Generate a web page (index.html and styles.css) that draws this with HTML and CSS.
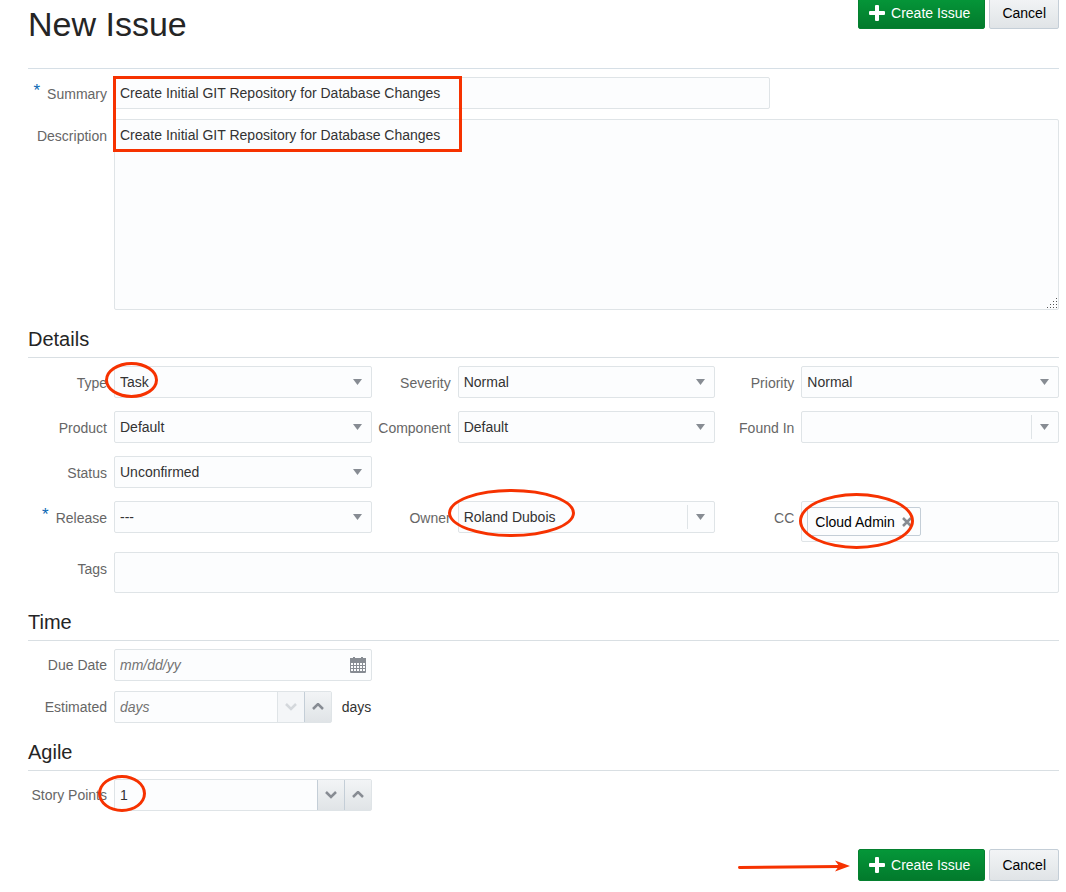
FILE: index.html
```html
<!DOCTYPE html>
<html lang="en">
<head>
<meta charset="utf-8">
<meta name="viewport" content="width=device-width, initial-scale=1">
<title>New Issue</title>
<link rel="stylesheet" href="styles.css">
</head>
<body>
<form class="page">
  <header class="page-header">
    <h1 class="page-title">New Issue</h1>
    <div class="actions">
      <button class="btn btn-primary" type="button"><svg class="plus" viewBox="0 0 16 16"><path d="M7 0h2q1 0 1 1v5h5q1 0 1 1v2q0 1-1 1h-5v5q0 1-1 1H7q-1 0-1-1v-5H1q-1 0-1-1V7q0-1 1-1h5V1q0-1 1-1z"/></svg>Create Issue</button>
      <button class="btn" type="button">Cancel</button>
    </div>
  </header>

  <div class="rows">
    <div class="field">
      <label class="label" for="summary"><span class="required">*</span>Summary</label>
      <div class="control control-summary">
        <input class="box" id="summary" type="text" value="Create Initial GIT Repository for Database Changes">
        <span class="mark mark-summary"></span>
      </div>
    </div>
    <div class="field">
      <label class="label" for="description">Description</label>
      <div class="control">
        <textarea class="box area" id="description">Create Initial GIT Repository for Database Changes</textarea>
        <svg class="grip" viewBox="0 0 11 11"><path d="M9 0h1v1h-1zM6 3h1v1h-1zM9 3h1v1h-1zM3 6h1v1h-1zM6 6h1v1h-1zM9 6h1v1h-1zM0 9h1v1h-1zM3 9h1v1h-1zM6 9h1v1h-1zM9 9h1v1h-1z"/></svg>
      </div>
    </div>
  </div>

  <h2 class="section-title">Details</h2>
  <div class="details">
    <div class="field">
      <label class="label" for="type">Type</label>
      <div class="control">
        <select class="box" id="type"><option>Task</option></select>
        <svg class="caret" viewBox="0 0 10 6"><path d="M0 0h9L4.500 6z"/></svg>
        <span class="mark oval mark-type"></span>
      </div>
    </div>
    <div class="field">
      <label class="label" for="severity">Severity</label>
      <div class="control">
        <select class="box" id="severity"><option>Normal</option></select>
        <svg class="caret" viewBox="0 0 10 6"><path d="M0 0h9L4.500 6z"/></svg>
      </div>
    </div>
    <div class="field">
      <label class="label" for="priority">Priority</label>
      <div class="control">
        <select class="box" id="priority"><option>Normal</option></select>
        <svg class="caret" viewBox="0 0 10 6"><path d="M0 0h9L4.500 6z"/></svg>
      </div>
    </div>
    <div class="field">
      <label class="label" for="product">Product</label>
      <div class="control">
        <select class="box" id="product"><option>Default</option></select>
        <svg class="caret" viewBox="0 0 10 6"><path d="M0 0h9L4.500 6z"/></svg>
      </div>
    </div>
    <div class="field">
      <label class="label" for="component">Component</label>
      <div class="control">
        <select class="box" id="component"><option>Default</option></select>
        <svg class="caret" viewBox="0 0 10 6"><path d="M0 0h9L4.500 6z"/></svg>
      </div>
    </div>
    <div class="field">
      <label class="label" for="found">Found In</label>
      <div class="control">
        <input class="box" id="found" type="text">
        <button class="combo-button" type="button" aria-label="Show versions"><svg class="caret-icon" viewBox="0 0 10 6"><path d="M0 0h9L4.500 6z"/></svg></button>
      </div>
    </div>
    <div class="field first">
      <label class="label" for="status">Status</label>
      <div class="control">
        <select class="box" id="status"><option>Unconfirmed</option></select>
        <svg class="caret" viewBox="0 0 10 6"><path d="M0 0h9L4.500 6z"/></svg>
      </div>
    </div>
    <div class="field first">
      <label class="label" for="release"><span class="required">*</span>Release</label>
      <div class="control">
        <select class="box" id="release"><option>---</option></select>
        <svg class="caret" viewBox="0 0 10 6"><path d="M0 0h9L4.500 6z"/></svg>
      </div>
    </div>
    <div class="field">
      <label class="label" for="owner">Owner</label>
      <div class="control">
        <input class="box" id="owner" type="text" value="Roland Dubois">
        <button class="combo-button" type="button" aria-label="Show owners"><svg class="caret-icon" viewBox="0 0 10 6"><path d="M0 0h9L4.500 6z"/></svg></button>
        <span class="mark oval mark-owner"></span>
      </div>
    </div>
    <div class="field">
      <label class="label" for="cc">CC</label>
      <div class="control">
        <div class="box tokens">
          <span class="token">Cloud Admin<button class="token-remove" type="button" aria-label="Remove Cloud Admin"><svg class="cross" viewBox="0 0 10 10"><path d="M1 1l8 8M9 1l-8 8"/></svg></button></span>
          <input class="token-input" id="cc" type="text">
        </div>
        <span class="mark oval mark-cc"></span>
      </div>
    </div>
    <div class="field wide">
      <label class="label" for="tags">Tags</label>
      <div class="control"><input class="box tall" id="tags" type="text"></div>
    </div>
  </div>

  <h2 class="section-title">Time</h2>
  <div class="rows narrow">
    <div class="field">
      <label class="label" for="due">Due Date</label>
      <div class="control">
        <input class="box" id="due" type="text" placeholder="mm/dd/yy">
        <button class="date-button" type="button" aria-label="Pick a date"><svg class="calendar" viewBox="0 0 16 16"><path class="calendar-body" d="M3 0h2v1h6V0h2v1h3v14q0 1-1 1H1q-1 0-1-1V1h3z"/><path class="calendar-days" d="M1 6h2v2H1zM4 6h2v2H4zM7 6h2v2H7zM10 6h2v2h-2zM13 6h2v2h-2zM1 9h2v2H1zM4 9h2v2H4zM7 9h2v2H7zM10 9h2v2h-2zM13 9h2v2h-2zM1 12h2v2H1zM4 12h2v2H4zM7 12h2v2H7zM10 12h2v2h-2zM13 12h2v2h-2z"/></svg></button>
      </div>
    </div>
    <div class="field">
      <label class="label" for="estimated">Estimated</label>
      <div class="with-unit">
        <div class="box spinner">
          <input class="spinner-input" id="estimated" type="text" placeholder="days">
          <button class="step" type="button" aria-label="Decrease estimate" disabled><svg class="chevron" viewBox="0 0 12 8"><path d="M1 1l5 5 5-5"/></svg></button>
          <button class="step" type="button" aria-label="Increase estimate"><svg class="chevron" viewBox="0 0 12 8"><path d="M1 6l5-5 5 5"/></svg></button>
        </div>
        <span class="unit">days</span>
      </div>
    </div>
  </div>

  <h2 class="section-title">Agile</h2>
  <div class="rows narrow">
    <div class="field">
      <label class="label" for="points">Story Points</label>
      <div class="control">
        <div class="box spinner">
          <input class="spinner-input" id="points" type="text" value="1">
          <button class="step" type="button" aria-label="Decrease points"><svg class="chevron" viewBox="0 0 12 8"><path d="M1 1l5 5 5-5"/></svg></button>
          <button class="step" type="button" aria-label="Increase points"><svg class="chevron" viewBox="0 0 12 8"><path d="M1 6l5-5 5 5"/></svg></button>
        </div>
        <span class="mark oval mark-points"></span>
      </div>
    </div>
  </div>

  <footer class="page-footer">
    <svg class="arrow" viewBox="0 0 112 14"><path class="arrow-line" d="M1.500 9.500L102 8.500"/><path class="arrow-head" d="M97 2.500L112 8 97 13.500l4-5.500z"/></svg>
    <div class="actions">
      <button class="btn btn-primary" type="button"><svg class="plus" viewBox="0 0 16 16"><path d="M7 0h2q1 0 1 1v5h5q1 0 1 1v2q0 1-1 1h-5v5q0 1-1 1H7q-1 0-1-1v-5H1q-1 0-1-1V7q0-1 1-1h5V1q0-1 1-1z"/></svg>Create Issue</button>
      <button class="btn" type="button">Cancel</button>
    </div>
  </footer>
</form>
</body>
</html>
```

FILE: styles.css
```css
* {
  box-sizing: border-box;
}

body {
  margin: 0;
  background: #fff;
  color: #333;
  font: 14px/18px "Liberation Sans", Arial, sans-serif;
}

input,
select,
textarea,
button {
  margin: 0;
  color: inherit;
  font: inherit;
}

.page {
  padding: 0 7px 11px 28px;
}

.page-header {
  display: flex;
  justify-content: space-between;
  align-items: flex-start;
  margin-top: -3px;
  padding-bottom: 24px;
  border-bottom: 1px solid #d6dfe6;
}

.page-title {
  margin: 7px 0 0;
  color: #252525;
  font-size: 34px;
  font-weight: 400;
  line-height: 40px;
}

.actions {
  display: flex;
  gap: 4px;
}

.btn {
  display: flex;
  align-items: center;
  gap: 6px;
  height: 32px;
  padding: 0 12px;
  border: 1px solid #c4ced7;
  border-radius: 2px;
  background: linear-gradient(#f2f4f6, #e0e4e7);
  color: #000;
}

.btn-primary {
  padding: 0 14px 0 10px;
  border-color: #04802f;
  background: linear-gradient(#059739, #027a2c);
  color: #fff;
}

.plus {
  width: 16px;
  height: 16px;
  fill: #fff;
}

.rows {
  display: grid;
  gap: 10px;
  padding-top: 8px;
}

.details {
  display: grid;
  grid-template-columns: repeat(3, minmax(0, 1fr));
  grid-auto-rows: minmax(35px, auto);
  row-gap: 10px;
  padding-top: 8px;
}

.narrow {
  grid-template-columns: minmax(0, 1fr);
  width: calc(100% / 3);
}

.field {
  display: grid;
  grid-template-columns: 79px minmax(0, 1fr);
  column-gap: 7px;
  align-items: start;
}

.first {
  grid-column: 1;
}

.wide {
  grid-column: 1 / -1;
}

.label {
  display: flex;
  justify-content: flex-end;
  padding-top: 8px;
  color: #666;
  white-space: nowrap;
}

.required {
  margin-right: 7px;
  color: #0a68b4;
  font-size: 17px;
  line-height: 12px;
}

.control {
  display: grid;
  grid-template-columns: minmax(0, 1fr);
  position: relative;
}

.control > * {
  grid-area: 1 / 1;
}

.control-summary {
  max-width: 656px;
}

.box {
  width: 100%;
  height: 32px;
  padding: 0 5px;
  border: 1px solid #dfe4e7;
  border-radius: 2px;
  background: #fcfdfe;
  appearance: none;
}

.area {
  height: 191px;
  padding: 6px 5px;
  resize: none;
}

.tall {
  height: 41px;
}

.grip {
  place-self: end;
  width: 11px;
  height: 11px;
  margin: 0 1px 1px 0;
  fill: #555;
}

.caret {
  place-self: center end;
  width: 10px;
  height: 6px;
  margin-right: 9px;
  fill: #878c93;
  pointer-events: none;
}

.combo-button {
  place-self: center end;
  display: grid;
  place-content: center;
  width: 27px;
  height: 24px;
  margin-right: 1px;
  padding: 0;
  border: 0;
  border-left: 1px solid #dfe4e7;
  background: none;
}

.caret-icon {
  width: 10px;
  height: 6px;
  fill: #878c93;
}

.tokens {
  display: flex;
  height: auto;
  padding: 5px;
}

.token {
  display: flex;
  align-items: center;
  flex: none;
  gap: 7px;
  height: 29px;
  padding: 0 8px 0 7px;
  border: 1px solid #c4ced7;
  border-radius: 2px;
  background: #fcfdfe;
  color: #000;
}

.token-remove {
  display: flex;
  padding: 0;
  border: 0;
  background: none;
}

.cross {
  width: 10px;
  height: 10px;
  fill: none;
  stroke: #878c93;
  stroke-width: 2.5;
}

.token-input {
  flex: 1;
  min-width: 0;
  padding: 0;
  border: 0;
  background: none;
}

.section-title {
  margin: 15px 0 0;
  padding-bottom: 4px;
  border-bottom: 1px solid #d9dfe3;
  color: #252525;
  font-size: 20px;
  font-weight: 400;
  line-height: 28px;
}

::placeholder {
  color: #737373;
  font-style: italic;
  opacity: 1;
}

.narrow .label {
  padding-top: 7px;
}

.date-button {
  place-self: center end;
  display: flex;
  margin-right: 6px;
  padding: 0;
  border: 0;
  background: none;
}

.calendar {
  width: 16px;
  height: 16px;
}

.calendar-body {
  fill: #878c93;
}

.calendar-days {
  fill: #fcfdfe;
}

.with-unit {
  display: flex;
  align-items: center;
  gap: 10px;
}

.spinner {
  display: flex;
  min-width: 0;
  padding: 0;
}

.with-unit .spinner {
  flex: 1;
}

.unit {
  flex: none;
  min-width: 30px;
}

.spinner-input {
  flex: 1;
  width: 0;
  min-width: 0;
  padding: 0 5px;
  border: 0;
  background: none;
}

.step {
  display: grid;
  place-content: center;
  flex: none;
  width: 27px;
  padding: 0;
  border: 0;
  border-left: 1px solid #c4ced7;
  background: linear-gradient(#f2f4f6, #e0e4e7);
}

.step:disabled {
  border-color: #dfe4e7;
  background: #f4f6f8;
}

.chevron {
  width: 12px;
  height: 8px;
  fill: none;
  stroke: #878c93;
  stroke-width: 2.5;
}

.step:disabled .chevron {
  stroke: #d4d8dc;
}

.mark {
  position: absolute;
  border: 3px solid #f63200;
  pointer-events: none;
}

.oval {
  border-radius: 50%;
}

.mark-summary {
  top: -1px;
  left: -1px;
  z-index: 1;
  width: 349px;
  height: 76px;
}

.mark-type {
  top: -4px;
  left: -9px;
  width: 53px;
  height: 36px;
}

.mark-owner {
  top: -12px;
  left: -10px;
  width: 127px;
  height: 48px;
}

.mark-cc {
  top: -8px;
  left: -2px;
  width: 115px;
  height: 56px;
}

.mark-points {
  top: -4px;
  left: -16px;
  width: 48px;
  height: 37px;
}

.page-footer {
  display: flex;
  justify-content: flex-end;
  align-items: center;
  gap: 8px;
  margin-top: 38px;
}

.arrow {
  width: 112px;
  height: 14px;
}

.arrow-line {
  fill: none;
  stroke: #f63200;
  stroke-width: 3;
  stroke-linecap: round;
}

.arrow-head {
  fill: #f63200;
}
```
